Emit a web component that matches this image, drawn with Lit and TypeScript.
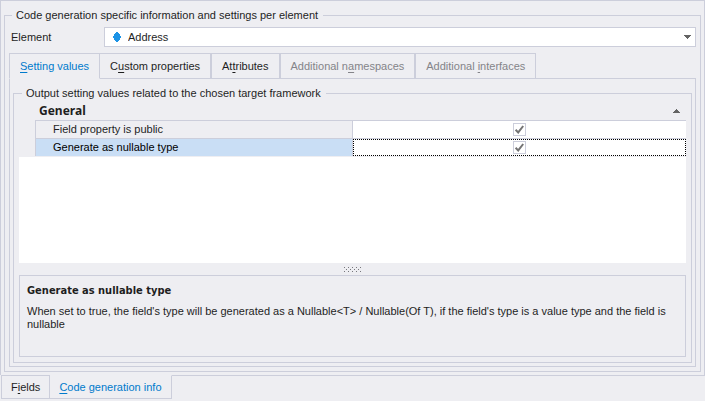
import { LitElement, html, css, svg, nothing } from "lit";
import { customElement, property, state } from "lit/decorators.js";
import { classMap } from "lit/directives/class-map.js";

interface TabItem {
  before: string;
  key: string;
  after: string;
  disabled?: boolean;
}

interface Setting {
  name: string;
  value: boolean;
}

@customElement("tab-label")
class TabLabel extends LitElement {
  @property({ attribute: false }) item!: TabItem;

  static styles = css`
    .key {
      text-decoration: underline;
      text-underline-offset: 2px;
      text-decoration-thickness: 1px;
    }
  `;

  render() {
    const { before, key, after } = this.item;
    return html`${before}<span class="key">${key}</span>${after}`;
  }
}

@customElement("settings-grid")
class SettingsGrid extends LitElement {
  @property({ attribute: false }) settings: Setting[] = [];
  @property({ type: Number }) selected = 0;

  static styles = css`
    :host {
      display: block;
      flex: 1;
      min-height: 161px;
      background: #ffffff;
    }
    .grid {
      width: 100%;
      table-layout: fixed;
      border-collapse: separate;
      border-spacing: 0;
      border-bottom: 1px solid var(--face);
      background: var(--face);
    }
    .indent {
      width: 16px;
    }
    .names {
      width: 318px;
    }
    th,
    td {
      box-sizing: border-box;
      height: 18px;
      padding: 0;
      font-weight: normal;
      text-align: left;
      line-height: 13px;
    }
    .category {
      padding-left: 4px;
      font-family: "Noto Sans", "Open Sans", sans-serif;
      font-size: 12px;
      font-weight: bold;
      line-height: 16px;
    }
    .toggle-cell {
      padding-right: 6px;
      text-align: right;
    }
    .toggle {
      display: block;
      margin-left: auto;
      padding: 0;
      border: 0;
      background: none;
    }
    .arrow {
      display: block;
    }
    .name {
      padding-left: 17px;
      border: solid var(--line);
      border-width: 1px 1px 0 1px;
    }
    .value {
      border-top: 1px solid var(--line);
      background: #ffffff;
    }
    .current .name {
      background: #c9def5;
      color: #000000;
    }
    .cell {
      box-sizing: border-box;
      display: grid;
      place-items: center;
      height: 17px;
      border: 1px solid transparent;
    }
    .current .cell {
      border: 1px dotted #000000;
    }
    .check {
      display: grid;
    }
    .box {
      grid-area: 1 / 1;
      appearance: none;
      box-sizing: border-box;
      width: 13px;
      height: 13px;
      margin: 0;
      border: 1px solid var(--line);
      background: #ffffff;
    }
    .mark {
      grid-area: 1 / 1;
      pointer-events: none;
    }
  `;

  render() {
    return html`<table class="grid">
      <colgroup>
        <col class="indent" />
        <col class="names" />
        <col />
      </colgroup>
      <tr>
        <td></td>
        <th class="category" scope="rowgroup">General</th>
        <td class="toggle-cell">
          <button class="toggle" aria-label="Collapse General">
            <svg class="arrow" width="7" height="4" viewBox="0 0 7 4">
              <path d="M3 0h1v1h1v1h1v1h1v1H0V3h1V2h1V1h1z" fill="#646464" />
            </svg>
          </button>
        </td>
      </tr>
      ${this.settings.map(
        (s, i) => html`<tr class=${classMap({ current: i === this.selected })}>
          <td></td>
          <th class="name" scope="row" id="name-${i}">${s.name}</th>
          <td class="value">
            <div class="cell">
              <span class="check">
                <input class="box" type="checkbox" aria-labelledby="name-${i}" .checked=${s.value} />
                ${s.value
                  ? html`<svg class="mark" width="13" height="13" viewBox="0 0 13 13">
                      <path d="M2.6 6.8L5.2 9.4L10.2 3" fill="none" stroke="#747474" stroke-width="2" />
                    </svg>`
                  : nothing}
              </span>
            </div>
          </td>
        </tr>`
      )}
    </table>`;
  }
}

@customElement("app-root")
class AppRoot extends LitElement {
  @state() private tab = 0;
  @state() private page = 1;

  private tabs: TabItem[] = [
    { before: "", key: "S", after: "etting values" },
    { before: "C", key: "u", after: "stom properties" },
    { before: "At", key: "t", after: "ributes" },
    { before: "Additional n", key: "a", after: "mespaces", disabled: true },
    { before: "Additional ", key: "i", after: "nterfaces", disabled: true },
  ];

  private pages: TabItem[] = [
    { before: "F", key: "i", after: "elds" },
    { before: "", key: "C", after: "ode generation info" },
  ];

  private settings: Setting[] = [
    { name: "Field property is public", value: true },
    { name: "Generate as nullable type", value: true },
  ];

  static styles = css`
    :host {
      --face: #eeeef2;
      --line: #cccedb;
      --accent: #007acc;
      box-sizing: border-box;
      display: flex;
      flex-direction: column;
      min-height: 100vh;
      padding-bottom: 2px;
      background: var(--face);
      color: #1e1e1e;
      font: 11px/13px "Liberation Sans", Arial, sans-serif;
    }
    .frame {
      flex: 1;
      display: flex;
      flex-direction: column;
      padding: 8px 3px 3px;
      border: solid var(--line);
      border-width: 1px 1px 0;
    }
    .group {
      flex: 1;
      display: flex;
      flex-direction: column;
      min-width: 0;
      margin: 0;
      border: 1px solid var(--line);
    }
    .element-group {
      padding: 5px 4px 4px;
    }
    .output-group {
      padding: 2px 5px 5px;
    }
    .legend {
      margin-left: 3px;
      padding: 0 5px 0 4px;
    }
    .field {
      display: flex;
      align-items: center;
      margin-bottom: 6px;
    }
    .field-label {
      width: 93px;
      padding-left: 2px;
    }
    .combo {
      box-sizing: border-box;
      flex: 1;
      display: flex;
      align-items: center;
      height: 20px;
      padding: 0 4px 0 8px;
      border: 1px solid var(--line);
      background: #ffffff;
    }
    .select {
      flex: 1;
      appearance: none;
      height: 18px;
      padding: 0 0 0 7px;
      border: 0;
      background: none;
      color: inherit;
      font: inherit;
    }
    .tabs {
      display: flex;
    }
    .tabs::after {
      content: "";
      flex: 1;
    }
    .top::after {
      border-bottom: 1px solid var(--line);
    }
    .bottom::after {
      border-top: 1px solid var(--line);
    }
    .tab {
      box-sizing: border-box;
      padding: 0 10px;
      border: 1px solid var(--line);
      background: none;
      color: inherit;
      font: inherit;
      white-space: nowrap;
    }
    .tab:disabled {
      color: #848489;
    }
    .top .tab {
      height: 26px;
    }
    .bottom .tab {
      height: 24px;
      padding: 0 9px;
    }
    .tab.active {
      color: var(--accent);
    }
    .active + .tab {
      border-left: 0;
    }
    .top .active {
      border-bottom-color: transparent;
    }
    .bottom .active {
      border-left: 0;
      border-top-color: transparent;
    }
    .bottom {
      padding-left: 1px;
    }
    .panel {
      flex: 1;
      display: flex;
      flex-direction: column;
      padding: 8px 3px 3px;
      border: solid var(--line);
      border-width: 0 1px 1px;
    }
    .splitter {
      display: grid;
      place-items: center;
      height: 12px;
    }
    .hint {
      box-sizing: border-box;
      min-height: 82px;
      padding: 8px 7px;
      border: 1px solid var(--line);
    }
    .hint-title {
      margin: 0 0 8px;
      font-family: "DejaVu Sans Condensed", "Noto Sans", sans-serif;
      font-size: 11px;
      font-weight: bold;
    }
    .hint-text {
      margin: 0;
    }
  `;

  private renderTabs(items: TabItem[], active: number, kind: string, pick: (i: number) => void) {
    return html`<div class="tabs ${kind}" role="tablist">
      ${items.map(
        (item, i) => html`<button
          class=${classMap({ tab: true, active: i === active })}
          role="tab"
          aria-selected=${i === active}
          ?disabled=${item.disabled}
          @click=${() => pick(i)}
        ><tab-label .item=${item}></tab-label></button>`
      )}
    </div>`;
  }

  render() {
    const dots = [0, 4, 8, 12, 16];
    return html`
      <main class="frame">
        <fieldset class="group element-group">
          <legend class="legend">Code generation specific information and settings per element</legend>
          <div class="field">
            <label class="field-label" for="element">Element</label>
            <div class="combo">
              <svg width="8" height="10" viewBox="0 0 8 10">
                <path d="M3 0h2v1h1v1h1v2h1v2H7v2H6v1H5v1H3V9H2V8H1V6H0V4h1V2h1V1h1z" fill="#1b93e6" />
              </svg>
              <select class="select" id="element">
                <option>Address</option>
              </select>
              <svg width="7" height="4" viewBox="0 0 7 4">
                <path d="M0 0h7v1H6v1H5v1H4v1H3V3H2V2H1V1H0z" fill="#646464" />
              </svg>
            </div>
          </div>
          ${this.renderTabs(this.tabs, this.tab, "top", (i) => (this.tab = i))}
          <section class="panel" role="tabpanel">
            <fieldset class="group output-group">
              <legend class="legend">Output setting values related to the chosen target framework</legend>
              <settings-grid .settings=${this.settings} selected="1"></settings-grid>
              <div class="splitter">
                <svg width="18" height="5" viewBox="0 0 18 5">
                  ${dots.map(
                    (x) => svg`<path transform="translate(${x} 0)" d="M0 0h1v1H0zM2 2h1v1H2zM0 4h1v1H0z" fill="#77777c" />`
                  )}
                </svg>
              </div>
              <section class="hint">
                <h2 class="hint-title">Generate as nullable type</h2>
                <p class="hint-text">
                  When set to true, the field's type will be generated as a Nullable&lt;T&gt; / Nullable(Of T), if the
                  field's type is a value type and the field is nullable
                </p>
              </section>
            </fieldset>
          </section>
        </fieldset>
      </main>
      ${this.renderTabs(this.pages, this.page, "bottom", (i) => (this.page = i))}
    `;
  }
}
